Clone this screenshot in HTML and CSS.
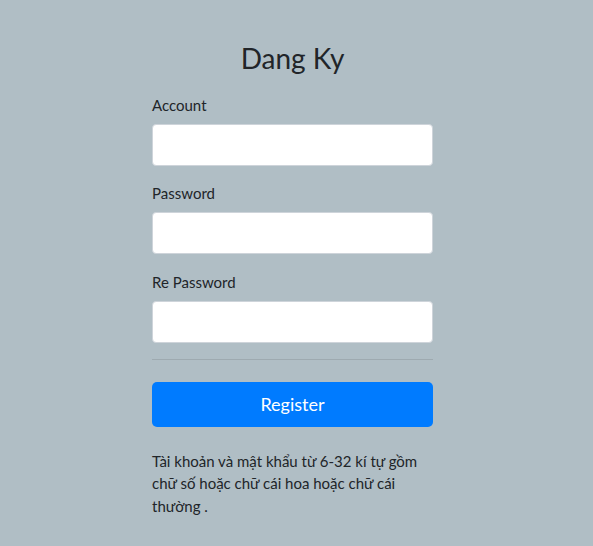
FILE: index.html
```html
<!DOCTYPE html>
<html lang="vi">
<head>
<meta charset="utf-8">
<title>Dang Ky</title>
<link rel="stylesheet" href="styles.css">
</head>
<body>
<div class="wrap">
  <h3 class="title">Dang Ky</h3>
  <form class="form">
    <div class="group">
      <label class="label" for="acc">Account</label>
      <input class="input" id="acc" type="text">
    </div>
    <div class="group">
      <label class="label" for="pw">Password</label>
      <input class="input" id="pw" type="password">
    </div>
    <div class="group">
      <label class="label" for="rpw">Re Password</label>
      <input class="input" id="rpw" type="password">
    </div>
    <hr class="sep">
    <button class="btn" type="button">Register</button>
  </form>
  <p class="note">Tài khoản và mật khẩu từ 6-32 kí tự gồm chữ số hoặc chữ cái hoa hoặc chữ cái thường .</p>
</div>
</body>
</html>
```
FILE: styles.css
```css
html, body {
  margin: 0;
  padding: 0;
}
body {
  background: #b0bec5;
  font-family: Lato, "Noto Sans", sans-serif;
  color: #212529;
}
.wrap {
  width: 281px;
  margin-left: 152px;
  padding-top: 42px;
}
.title {
  margin: 0 0 17px;
  font-size: 28px;
  font-weight: 400;
  line-height: 1.2;
  text-align: center;
}
.form {
  display: flex;
  flex-direction: column;
  margin: 0;
}
.group {
  display: flex;
  flex-direction: column;
  margin-bottom: 15.5px;
}
.group:last-of-type {
  margin-bottom: 0;
}
.label {
  font-size: 15px;
  line-height: 24px;
  margin-bottom: 7px;
}
.input {
  box-sizing: border-box;
  height: 42px;
  width: 100%;
  margin: 0;
  border: 1px solid #ced4da;
  border-radius: 4px;
  background: #fff;
  font: inherit;
}
.sep {
  width: 100%;
  margin: 16px 0 22px;
  border: 0;
  border-top: 1px solid rgba(0, 0, 0, 0.1);
  height: 0;
}
.btn {
  box-sizing: border-box;
  height: 45px;
  width: 100%;
  border: 0;
  border-radius: 5px;
  background: #007bff;
  color: #fff;
  font-family: inherit;
  font-size: 18px;
  line-height: 30px;
  padding: 0;
}
.note {
  margin: 23px 0 0;
  font-size: 15px;
  line-height: 22.5px;
}
```
